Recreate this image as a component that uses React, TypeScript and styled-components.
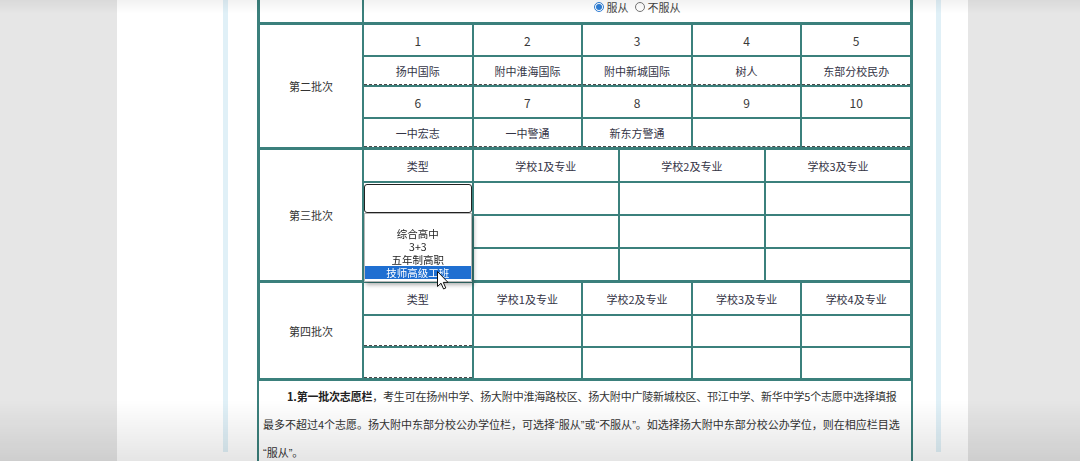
import React from "react";
import styled, { createGlobalStyle } from "styled-components";

const teal = "#3b807c";
const cjk = `"Noto Sans CJK SC", "Noto Sans", sans-serif`;

const GlobalStyle = createGlobalStyle`
  html, body {
    margin: 0;
    padding: 0;
    background: #e6e6e6;
    font-family: ${cjk};
  }
`;

const Page = styled.div`
  display: flex;
  height: 461px;
  overflow: hidden;
  background: #e6e6e6;
`;

const Gutter = styled.div<{ width?: number }>`
  flex: ${p => (p.width ? `0 0 ${p.width}px` : "1")};
`;

const Sheet = styled.div`
  flex: 0 0 851px;
  background: #fff;
  padding-left: 106px;
  box-sizing: border-box;
`;

const Frame = styled.div`
  width: 718px;
  height: 100%;
  box-sizing: border-box;
  border-left: 5px solid #e0f0f7;
  border-right: 5px solid #e0f0f7;
`;

const Table = styled.div`
  width: 656px;
  margin: -9px 0 0 29px;
  box-sizing: border-box;
  background: ${teal};
  padding: 3px;
  display: flex;
  flex-direction: column;
  gap: 3px;
`;

const Section = styled.div`
  display: grid;
  grid-template-columns: 102px 1fr;
  gap: 2px;
`;

const Label = styled.div`
  background: #fff;
  display: flex;
  align-items: center;
  justify-content: center;
  font-size: 11px;
  color: #333;
`;

const Grid = styled.div<{ cols: string; rows: string }>`
  display: grid;
  grid-template-columns: ${p => p.cols};
  grid-template-rows: ${p => p.rows};
  gap: 2px;
`;

const Cell = styled.div<{ dashed?: boolean; num?: boolean }>`
  position: relative;
  background: #fff;
  display: flex;
  align-items: center;
  justify-content: center;
  box-sizing: border-box;
  font-size: ${p => (p.num ? "12px" : "11px")};
  color: ${p => (p.num ? "#3a3a3a" : "#343446")};
  border-bottom: ${p => (p.dashed ? "1px dashed #4a4a4a" : "none")};
`;

const RadioRow = styled.div`
  display: flex;
  align-items: center;
  gap: 2px;
  font-size: 11px;
  color: #444;
  margin-top: -2px;
`;

const Radio = styled.input<{ spaced?: boolean }>`
  width: 10px;
  height: 10px;
  margin: 0 1px 0 ${p => (p.spaced ? "4px" : "0")};
  accent-color: #2f7fd6;
`;

const SelectCell = styled(Cell)`
  padding: 1px 0;
  align-items: stretch;
  z-index: 5;
`;

const SelectBox = styled.div`
  flex: 1;
  border: 1px solid #222;
  border-radius: 3px;
  background: #fff;
`;

const Popup = styled.div`
  position: absolute;
  left: 0;
  top: calc(100% - 1px);
  width: 100%;
  box-sizing: border-box;
  background: #fff;
  border: 1px solid #b8b8b8;
  box-shadow: 2px 3px 4px rgba(0, 0, 0, 0.3);
  padding-bottom: 2px;
`;

const Option = styled.div<{ active?: boolean }>`
  height: 13px;
  line-height: 13px;
  text-align: center;
  font-size: 10.5px;
  color: ${p => (p.active ? "#fff" : "#222")};
  background: ${p => (p.active ? "#1f6fd1" : "transparent")};
`;

const Cursor = styled.svg`
  position: absolute;
  left: 72px;
  top: 57px;
`;

const Notes = styled.div`
  width: 656px;
  margin-left: 29px;
  box-sizing: border-box;
  border-left: 2px solid ${teal};
  border-right: 2px solid ${teal};
  padding: 2px 0 0 4px;
  font-size: 11px;
  line-height: 27.5px;
  color: #333;
`;

const Line = styled.div<{ indent?: boolean; tight?: boolean }>`
  white-space: nowrap;
  letter-spacing: ${p => (p.tight ? "-0.2px" : "0")};
  padding-left: ${p => (p.indent ? "24px" : "0")};
`;

const Strong = styled.b`
  color: #222;
`;

const Quote = styled.span`
  font-family: "Liberation Sans", sans-serif;
`;

const Vignette = styled.div`
  position: fixed;
  inset: 0;
  pointer-events: none;
  background: linear-gradient(
    to bottom,
    rgba(0, 0, 0, 0.05) 0,
    rgba(0, 0, 0, 0) 14px,
    rgba(0, 0, 0, 0) 400px,
    rgba(0, 0, 0, 0.1) 100%
  );
`;

const secondBatch = [
  ["扬中国际", "附中淮海国际", "附中新城国际", "树人", "东部分校民办"],
  ["一中宏志", "一中警通", "新东方警通", "", ""],
];

const Quoted: React.FC<{ children: React.ReactNode }> = ({ children }) => (
  <>
    <Quote>“</Quote>
    {children}
    <Quote>”</Quote>
  </>
);

const App: React.FC = () => {
  return (
    <>
      <GlobalStyle />
      <Page>
        <Gutter width={117} />
        <Sheet>
          <Frame>
            <Table>
              <Section>
                <Label />
                <Grid cols="1fr" rows="28px">
                  <Cell>
                    <RadioRow>
                      <Radio type="radio" name="obey" defaultChecked />
                      服从
                      <Radio type="radio" name="obey" spaced />
                      不服从
                    </RadioRow>
                  </Cell>
                </Grid>
              </Section>

              <Section>
                <Label>第二批次</Label>
                <Grid cols="repeat(5, 1fr)" rows="30px 28px 30px 28px">
                  {secondBatch.map((names, r) => (
                    <React.Fragment key={r}>
                      {names.map((_, i) => (
                        <Cell num key={`n${i}`}>
                          {r * 5 + i + 1}
                        </Cell>
                      ))}
                      {names.map((name, i) => (
                        <Cell dashed key={`s${i}`}>
                          {name}
                        </Cell>
                      ))}
                    </React.Fragment>
                  ))}
                </Grid>
              </Section>

              <Section>
                <Label>第三批次</Label>
                <Grid cols="107.6fr 144fr 144fr 144fr" rows="repeat(4, 31px)">
                  <Cell>类型</Cell>
                  <Cell>学校1及专业</Cell>
                  <Cell>学校2及专业</Cell>
                  <Cell>学校3及专业</Cell>
                  <SelectCell>
                    <SelectBox />
                    <Popup>
                      <Option />
                      <Option>综合高中</Option>
                      <Option>3+3</Option>
                      <Option>五年制高职</Option>
                      <Option active>技师高级工班</Option>
                      <Cursor width="12" height="19" viewBox="0 0 12 19">
                        <path
                          d="M0.5 0.5 L0.5 15.5 L4 12.2 L6.6 18 L8.8 17 L6.3 11.4 L11 11.4 Z"
                          fill="#fff"
                          stroke="#111"
                          strokeWidth="1"
                          strokeLinejoin="round"
                        />
                      </Cursor>
                    </Popup>
                  </SelectCell>
                  {Array.from({ length: 11 }).map((_, i) => (
                    <Cell key={i} />
                  ))}
                </Grid>
              </Section>

              <Section>
                <Label>第四批次</Label>
                <Grid cols="repeat(5, 1fr)" rows="31px 30px 30px">
                  <Cell>类型</Cell>
                  <Cell>学校1及专业</Cell>
                  <Cell>学校2及专业</Cell>
                  <Cell>学校3及专业</Cell>
                  <Cell>学校4及专业</Cell>
                  {[0, 1].map(r => (
                    <React.Fragment key={r}>
                      <Cell dashed />
                      <Cell />
                      <Cell />
                      <Cell />
                      <Cell />
                    </React.Fragment>
                  ))}
                </Grid>
              </Section>
            </Table>

            <Notes>
              <Line indent tight>
                <Strong>1.第一批次志愿栏</Strong>，考生可在扬州中学、扬大附中淮海路校区、扬大附中广陵新城校区、邗江中学、新华中学5个志愿中选择填报
              </Line>
              <Line>
                最多不超过4个志愿。扬大附中东部分校公办学位栏，可选择<Quoted>服从</Quoted>或
                <Quoted>不服从</Quoted>。如选择扬大附中东部分校公办学位，则在相应栏目选
              </Line>
              <Line>
                <Quoted>服从</Quoted>。
              </Line>
            </Notes>
          </Frame>
        </Sheet>
        <Gutter />
      </Page>
      <Vignette />
    </>
  );
};

export default App;
